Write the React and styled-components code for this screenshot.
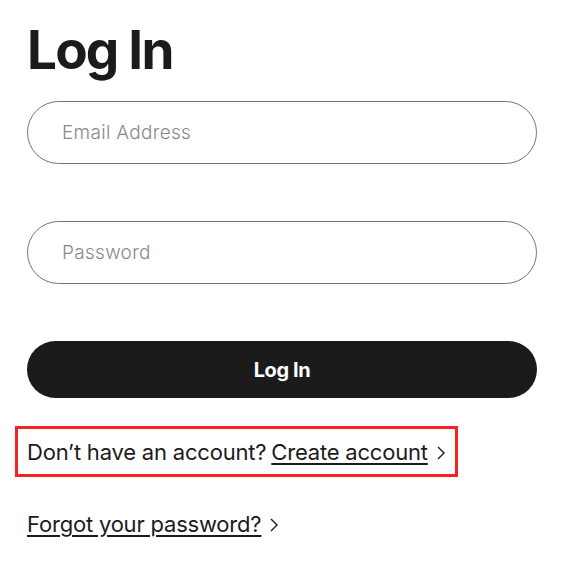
import React from 'react';
import styled, { createGlobalStyle } from 'styled-components';

const GlobalStyle = createGlobalStyle`
  body {
    margin: 0;
    background: #fff;
    font-family: Inter, "Liberation Sans", sans-serif;
    color: #1b1b1b;
  }
`;

const Chevron = () => (
  <ChevronSvg width="10" height="16" viewBox="0 0 10 16" aria-hidden="true">
    <polyline points="2,2 8,8 2,14" fill="none" stroke="#1b1b1b" strokeWidth="1.4" />
  </ChevronSvg>
);

const App = () => {
  return (
    <>
      <GlobalStyle />
      <Page>
        <Title>Log In</Title>
        <Form>
          <Field type="email" placeholder="Email Address" />
          <Field type="password" placeholder="Password" />
          <SubmitButton type="button">Log In</SubmitButton>
        </Form>
        <LinkRow highlighted>
          <span>Don’t have an account?</span>
          <TextLink href="#">Create account</TextLink>
          <Chevron />
        </LinkRow>
        <LinkRow>
          <TextLink href="#">Forgot your password?</TextLink>
          <Chevron />
        </LinkRow>
      </Page>
    </>
  );
};

const Page = styled.main`
  padding: 20px 38px 0 27px;
  display: flex;
  flex-direction: column;
`;

const Title = styled.h1`
  margin: 0;
  font-size: 53px;
  font-weight: 700;
  letter-spacing: -1.8px;
  line-height: 60px;
`;

const Form = styled.form`
  margin-top: 21px;
  display: flex;
  flex-direction: column;
  gap: 57px;
`;

const Field = styled.input`
  box-sizing: border-box;
  width: 510px;
  height: 63px;
  border: 1px solid #747474;
  border-radius: 32px;
  padding: 0 34px;
  font-family: inherit;
  font-size: 19px;
  font-weight: 300;
  letter-spacing: 0.3px;
  color: #1b1b1b;
  outline: none;

  &::placeholder {
    color: #8a8a8a;
  }
`;

const SubmitButton = styled.button`
  width: 510px;
  height: 57px;
  border: none;
  border-radius: 29px;
  background: #1b1b1b;
  color: #fff;
  font-family: inherit;
  font-size: 20px;
  font-weight: 700;
  letter-spacing: -0.4px;
  cursor: pointer;
`;

const LinkRow = styled.div`
  display: flex;
  align-items: center;
  gap: 5px;
  font-size: 22px;
  letter-spacing: -0.2px;
  line-height: 26px;
  width: fit-content;
  ${props => props.highlighted
    ? `
    margin: 28px 0 0 -12px;
    padding: 10px 9px 9px 9px;
    border: 3px solid #f22424;
    `
    : `
    margin-top: 34px;
    `}
`;

const TextLink = styled.a`
  color: #1b1b1b;
  text-decoration: underline;
  text-underline-offset: 3px;
  text-decoration-thickness: 1.5px;
`;

const ChevronSvg = styled.svg`
  margin-left: 3px;
  margin-top: 2px;
`;

export default App;
